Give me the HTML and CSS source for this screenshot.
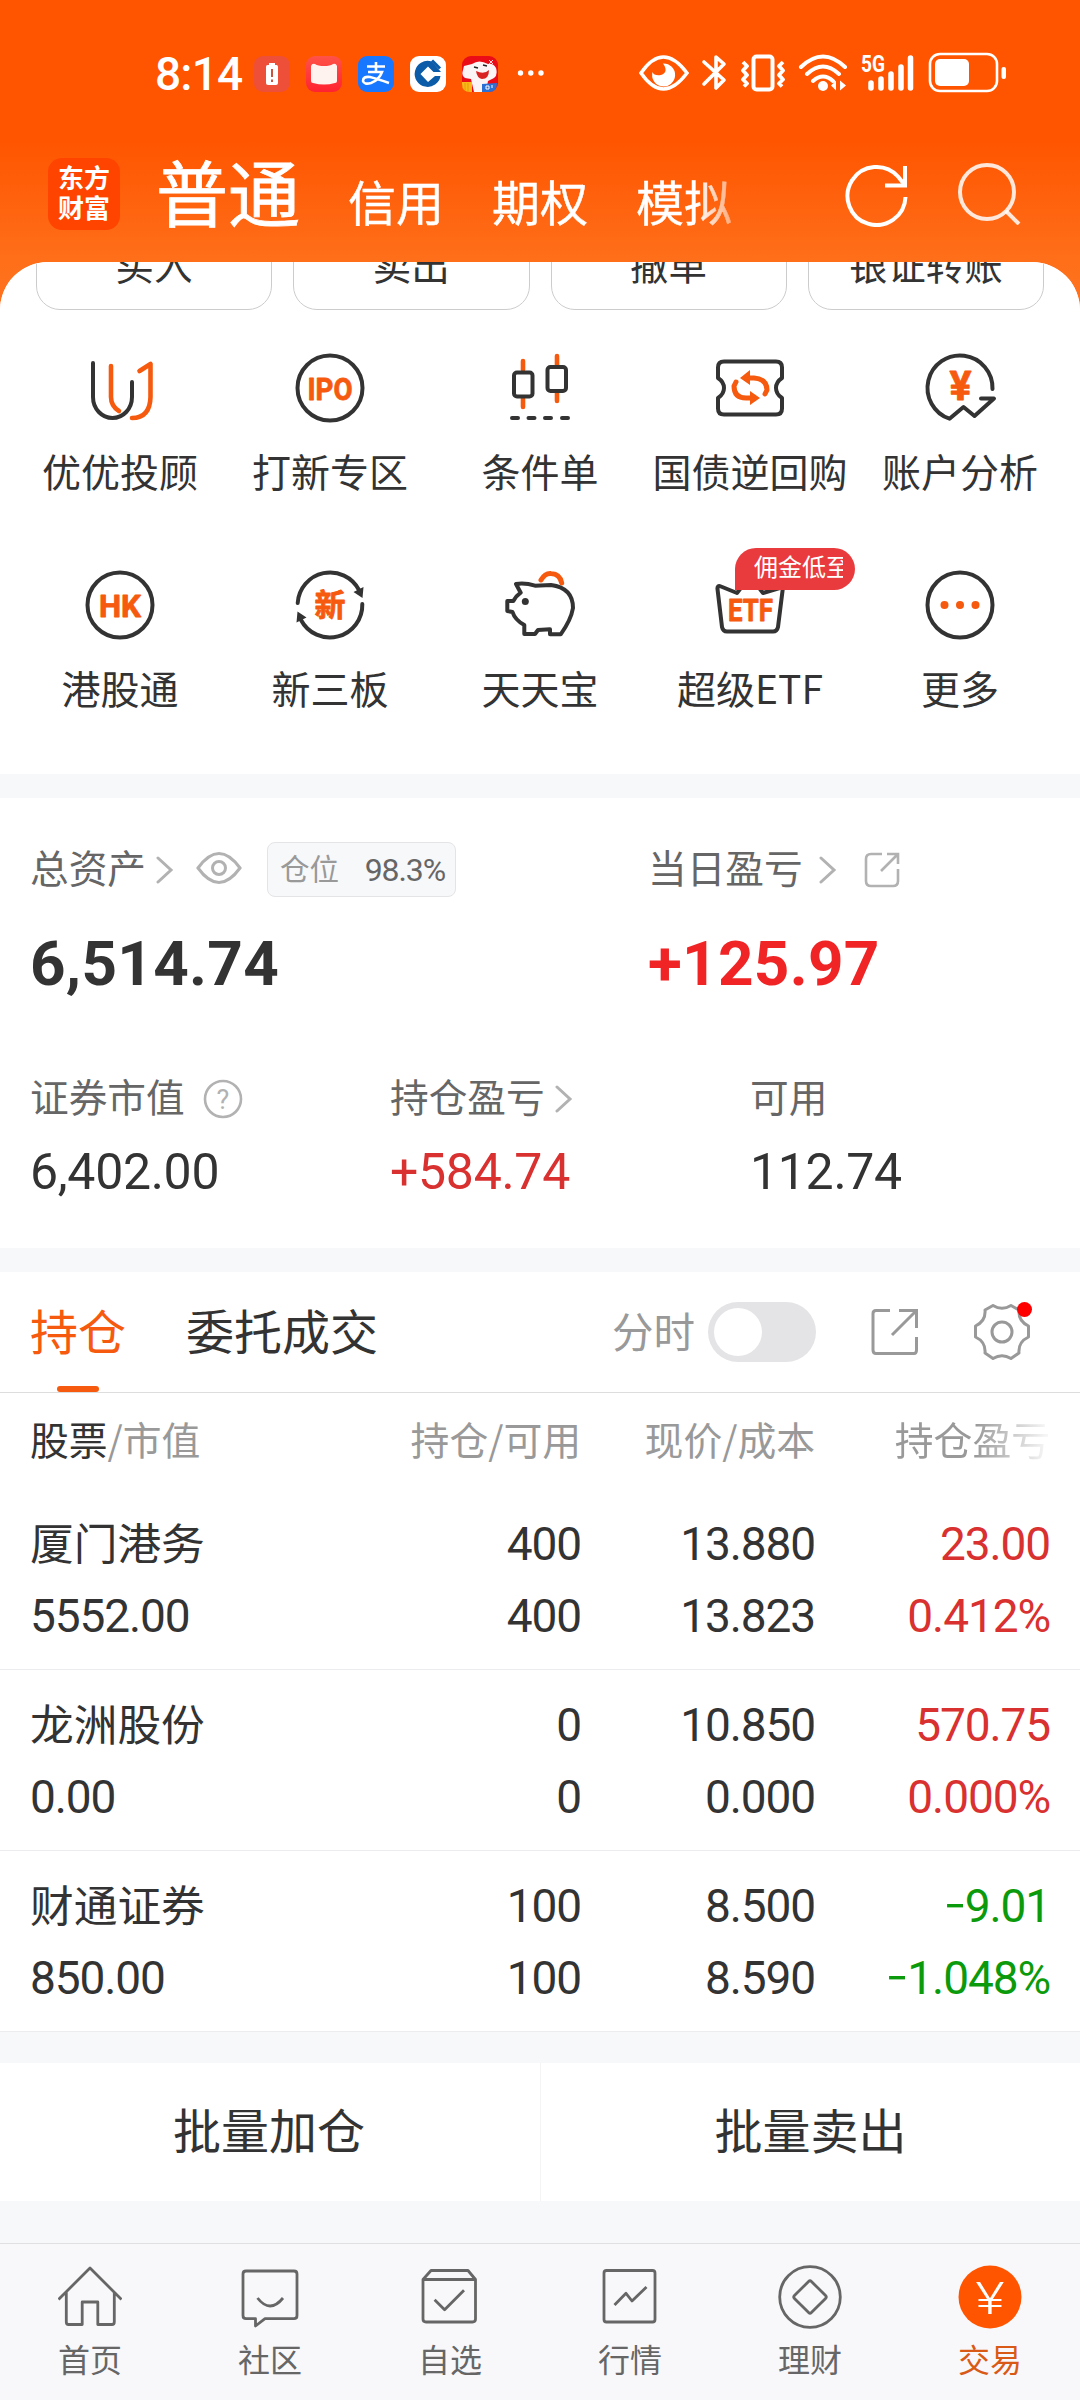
FILE: index.html
```html
<!DOCTYPE html>
<html lang="zh-CN">
<head>
<meta charset="utf-8">
<title>交易</title>
<link rel="stylesheet" href="styles.css">
</head>
<body>
<div class="phone">
  <header class="top">
    <div class="status">
      <span class="clock">8:14</span>
      <div class="apps">
        <svg class="app" viewBox="0 0 36 36"><rect width="36" height="36" rx="9" fill="#ee4f38"/><path d="M15 7h6v2h1.500q1.500 0 1.500 2v16q0 2-2 2h-8q-2 0-2-2V11q0-2 1.500-2H15z" fill="#fff"/><path d="M18 13v8M18 23.500v2.500" stroke="#c9543f" stroke-width="2"/></svg>
        <svg class="app" viewBox="0 0 36 36"><defs><linearGradient id="rg" x2="0" y2="1"><stop offset="0" stop-color="#ff5348"/><stop offset="1" stop-color="#ff2230"/></linearGradient></defs><rect width="36" height="36" rx="9" fill="url(#rg)"/><path d="M5 10q1-3 4-2 3 2 9 2t9-2q3-1 4 2v15q0 2-2 2-11 3-22 0-2 0-2-2z" fill="#fff3ef"/></svg>
        <svg class="app" viewBox="0 0 36 36"><rect width="36" height="36" rx="9" fill="#1777ff"/><g fill="none" stroke="#fff" stroke-width="2.600"><path d="M9 10.500h18M18 6v10M10 16h14q-3 8-11 11-7 2-8-2 0-5 7-4 8 2 19 6"/></g></svg>
        <svg class="app" viewBox="0 0 36 36"><rect width="36" height="36" rx="9" fill="#fff"/><path d="M21 5.300A13 13 0 1 0 30.500 20H25L18 26 10.500 18 18 10.500l5.500 5.500h7.500L24 8z" fill="#0b5ca8"/><path d="M22 4.500l8 8" stroke="#0b5ca8" stroke-width="3"/></svg>
        <svg class="app" viewBox="0 0 36 36"><rect width="36" height="36" rx="9" fill="#ea0c16"/><path d="M1 14Q-1 20 3 22l6 1 3 13h12l2-11 6-3q4-3 2-10-3-5-8-4Q17 3 10 8L2 10z" fill="#fbf5f5"/><path d="M14 15q8 4 13-1 0 9-7 9-5-1-6-8z" fill="#d92323"/><path d="M12 11l4 1M21 9l4 1" stroke="#222" stroke-width="1.500"/><path d="M27 4l4 4M31 4l-4 4" stroke="#ffd4d4"/><path d="M0 26h10v10H8q-8 0-8-8z" fill="#f8b917"/><path d="M20 28l15-1q0 9-8 9h-7z" fill="#2b70d4"/><path d="M3 27v7M6 27v8" stroke="#e89811"/><path d="M24 30h3v3h-3zM30 29v3" stroke="#fff" fill="none"/></svg>
        <svg class="dots" viewBox="0 0 28 8"><g fill="#fff"><circle cx="3.500" cy="4" r="2.700"/><circle cx="13.800" cy="4" r="2.700"/><circle cx="24" cy="4" r="2.700"/></g></svg>
      </div>
      <svg class="sys" viewBox="0 0 370 44" fill="none" stroke="#fff">
        <path d="M2 22Q24-10 48 22 24 54 2 22z" stroke-width="3.500"/>
        <path d="M13.500 21A11.500 11.500 0 1 0 24 12.500Q30 21 22 24 15 25 13.500 21z" fill="#fff" stroke="none"/>
        <path d="M65 11L85 29 77 37V6L85 13 65 33" stroke-width="3.600" stroke-linejoin="round" stroke-linecap="round"/>
        <rect x="114.500" y="5.500" width="19" height="33" rx="3" stroke-width="4"/>
        <path d="M104 11l4 4-4 4.500 4 4.500-4 4.500 4 4-3 3M144 11l-4 4 4 4.500-4 4.500 4 4.500-4 4 3 3" stroke-width="3.800" stroke-linejoin="round"/>
        <path d="M162 16Q184-5 206 16M168 23Q184 8 200 23M174 30Q184 21 194 30" stroke-width="4" stroke-linecap="round"/>
        <circle cx="184" cy="35" r="5" fill="#fff" stroke="none"/>
        <path d="M192 34.500l5-5v10zM201 29.500v10l6-5z" fill="#fff" stroke="none"/>
        <text x="222" y="20.500" class="g5" textLength="24" lengthAdjust="spacingAndGlyphs">5G</text>
        <path d="M232 32v5M242 28v9M252 23v14M262 16v21M271.500 7v30" stroke-width="5.500" stroke-linecap="round"/>
        <rect x="291" y="3" width="67" height="37" rx="10" stroke-width="2.600"/>
        <rect x="296" y="8" width="34" height="27" rx="5" fill="#fff" stroke="none"/>
        <rect x="362.500" y="16" width="4.500" height="12" rx="2" fill="#fff" stroke="none"/>
      </svg>
    </div>
    <nav class="head">
      <div class="logo"><span>东方</span><span>财富</span></div>
      <div class="kinds">
        <span class="kind-on">普通</span><span>信用</span><span>期权</span><span>模拟</span>
      </div>
      <svg class="refresh" viewBox="0 0 64 64" fill="none" stroke="#fff" stroke-width="4"><path d="M60.500 34A29 29 0 1 1 53 13.500L59 21"/><path d="M60 3V22.500H40"/></svg>
      <svg class="search" viewBox="0 0 64 64" fill="none" stroke="#fff" stroke-opacity=".85" stroke-width="4"><circle cx="29" cy="31" r="27"/><path d="M48 50L61 63"/></svg>
    </nav>
  </header>

  <main class="panel">
    <section class="quick">
      <div class="pills"><span>买入</span><span>卖出</span><span>撤单</span><span>银证转账</span></div>
      <div class="grid">
        <div class="cell"><svg viewBox="0 0 90 90"><path d="M18 20V54C18 66 27 75 37.500 75S57 66 57 54V39"/><path class="o" d="M36 23V54Q36 63 44 68M64.500 28L75.500 21V54Q75 75 57 75"/></svg><span>优优投顾</span></div>
        <div class="cell"><svg viewBox="0 0 90 90"><circle cx="45" cy="45" r="32.500"/><text x="22.500" y="56.500" textLength="45" lengthAdjust="spacingAndGlyphs">IPO</text></svg><span>打新专区</span></div>
        <div class="cell"><svg viewBox="0 0 90 90"><path class="o" d="M28 18v9M28 55v9M62 13v9M62 49v9"/><rect x="19" y="29.500" width="18.500" height="24" rx="3"/><rect x="52.500" y="24" width="18.500" height="24" rx="3"/><path d="M17 75h6M33.500 75h6M50 75h6M67 75h6"/></svg><span>条件单</span></div>
        <div class="cell"><svg viewBox="0 0 90 90"><path d="M19 18.500H71Q77 18.500 77 24.500V35Q71 39 71 45T77 55V65.500Q77 71.500 71 71.500H19Q13 71.500 13 65.500V55Q19 51 19 45T13 35V24.500Q13 18.500 19 18.500z"/><path class="o w" d="M42 35H49Q62 36 62 47L60 51M48 55H41Q29 55 29 43L31 39"/><path class="f" d="M35 35l10-8v15zM55 55l-10-7v14z"/></svg><span>国债逆回购</span></div>
        <div class="cell"><svg viewBox="0 0 90 90"><path d="M77.500 46A32.500 32.500 0 1 0 34.500 75.700L48.500 64 59.500 73 79 55.500H66"/><text x="45.500" y="57" text-anchor="middle" class="yen">¥</text></svg><span>账户分析</span></div>
        <div class="cell"><svg viewBox="0 0 90 90"><circle cx="45" cy="45" r="32.500"/><text x="24" y="56.500" textLength="42" lengthAdjust="spacingAndGlyphs">HK</text></svg><span>港股通</span></div>
        <div class="cell"><svg viewBox="0 0 90 90"><path d="M12.700 43A32.500 32.500 0 0 1 74 30M77.300 44A32.500 32.500 0 0 1 16 60"/><path class="d" d="M68.500 32l10-5-1 11zM21.500 57.500l-10 5 1-11z"/><text x="45" y="56" text-anchor="middle" class="xin">新</text></svg><span>新三板</span></div>
        <div class="cell"><svg viewBox="0 0 90 90"><path class="o w" d="M46 20Q50 13 56 13.500 65 14 66.700 23"/><path d="M25.700 32.700L21 24Q30 22.500 40 25.700L56 25Q78 28 78 48 76 60 65.700 74.300H55V69.300L43 70 40 74H29.300V65Q20 60 17.500 52L12.300 51V41H18.300Q21 36 25.700 32.700z"/><circle class="d" cx="30.300" cy="41.500" r="3.500"/></svg><span>天天宝</span></div>
        <div class="cell"><svg viewBox="0 0 90 90"><path d="M32 33L16 26.500Q12 25 12.500 29L17 67Q18 71.500 22 71.500H68Q72 71.500 73 67L78 27 58 33 45 16z"/><text x="23" y="61" textLength="45" lengthAdjust="spacingAndGlyphs">ETF</text></svg><span>超级ETF</span><div class="badge"><b>佣金低至</b></div></div>
        <div class="cell"><svg viewBox="0 0 90 90"><circle cx="45" cy="45" r="32.500"/><g class="f"><circle cx="29.500" cy="45" r="4"/><circle cx="45" cy="45" r="4"/><circle cx="60.500" cy="45" r="4"/></g></svg><span>更多</span></div>
      </div>
    </section>

    <section class="assets">
      <div class="row-a">
        <div class="total">
          <div class="lab"><span>总资产</span>
            <svg class="chev" viewBox="0 0 18 28"><path d="M2 2L15 14 2 26"/></svg>
            <svg class="eye" viewBox="0 0 46 34"><path d="M2 17Q23-12 44 17 23 46 2 17z"/><circle cx="23" cy="17" r="6.500"/></svg>
            <div class="pos"><span>仓位</span><b>98.3%</b></div>
          </div>
          <div class="big">6,514.74</div>
        </div>
        <div class="today">
          <div class="lab"><span>当日盈亏</span>
            <svg class="chev far" viewBox="0 0 18 28"><path d="M2 2L15 14 2 26"/></svg>
            <svg class="out" viewBox="0 0 36 36"><path d="M18 2H7Q2 2 2 7V29Q2 34 7 34H29Q34 34 34 29V17M17 19L33 3M23 2H34V12"/></svg>
          </div>
          <div class="big up">+125.97</div>
        </div>
      </div>
      <div class="row-b">
        <div><div class="lab"><span>证券市值</span><svg class="help" viewBox="0 0 40 40"><circle cx="20" cy="20" r="18"/><text x="20" y="29.500" text-anchor="middle">?</text></svg></div><div class="val">6,402.00</div></div>
        <div><div class="lab"><span>持仓盈亏</span><svg class="chev" viewBox="0 0 18 28"><path d="M2 2L15 14 2 26"/></svg></div><div class="val red">+584.74</div></div>
        <div><div class="lab"><span>可用</span></div><div class="val">112.74</div></div>
      </div>
    </section>

    <section class="hold">
      <div class="tabs">
        <span class="tab on">持仓</span><span class="tab">委托成交</span>
        <span class="fs">分时</span><span class="toggle"><i></i></span>
        <svg class="share" viewBox="0 0 48 48"><path d="M19 2.500H5Q2 2.500 2 5.500V42Q2 45.500 5 45.500H43Q45.500 45.500 45.500 42V29M21 27L45 3M28 2.500H45.500V20"/></svg>
        <div class="gear"><svg viewBox="0 0 56 56"><path d="M19 1.500Q28 7 37 1.500L45 6Q44 17 54.500 22V33Q44 38 45 49L37 54.500Q28 49 19 54.500L11 49Q12 38 1.500 33V22Q12 17 11 6z"/><circle cx="28" cy="28" r="10"/></svg><i></i></div>
      </div>
      <div class="line thead"><span><em>股票</em>/市值</span><span>持仓/可用</span><span>现价/成本</span><span class="fade">持仓盈亏</span></div>
      <div class="line stock"><div><b>厦门港务</b><u>5552.00</u></div><div><u>400</u><u>400</u></div><div><u>13.880</u><u>13.823</u></div><div class="red"><u>23.00</u><u>0.412%</u></div></div>
      <div class="line stock"><div><b>龙洲股份</b><u>0.00</u></div><div><u>0</u><u>0</u></div><div><u>10.850</u><u>0.000</u></div><div class="red"><u>570.75</u><u>0.000%</u></div></div>
      <div class="line stock"><div><b>财通证券</b><u>850.00</u></div><div><u>100</u><u>100</u></div><div><u>8.500</u><u>8.590</u></div><div class="green"><u><s>−</s>9.01</u><u><s>−</s>1.048%</u></div></div>
    </section>

    <div class="batch"><span>批量加仓</span><span>批量卖出</span></div>
  </main>

  <nav class="bar">
    <div><svg viewBox="0 0 64 64"><path d="M.5 34.500L32 3 63.500 34.500M8.300 27.500V57Q8.300 59.500 10.500 59.500H24.200V37H39.800V59.500H54Q56.300 59.500 56.300 57V27.500"/></svg><span>首页</span></div>
    <div><svg viewBox="0 0 64 64"><path d="M8 6H56Q59 6 59 9V50.500Q59 53.700 56 53.700H27L17.500 61V53.700H8Q5 53.700 5 50.500V9Q5 6 8 6zM19.500 33Q32 49 45 33"/></svg><span>社区</span></div>
    <div><svg viewBox="0 0 64 64"><path d="M5 14.500H57.500V54Q57.500 57 54.500 57H8Q5 57 5 54V14.500L13 5.500H50L57.500 14.500M16.600 34.700L26.600 44.700 46 25.300"/></svg><span>自选</span></div>
    <div><svg viewBox="0 0 64 64"><rect x="6" y="5.500" width="51" height="51.500" rx="2.500"/><path d="M16.500 40L28 28.300 34 36 48.500 22"/></svg><span>行情</span></div>
    <div><svg viewBox="0 0 64 64"><circle cx="32" cy="32" r="30.300"/><rect x="20" y="20" width="24" height="24" rx="2" transform="rotate(45 32 32)"/></svg><span>理财</span></div>
    <div class="on"><svg viewBox="0 0 64 64"><circle cx="32" cy="32" r="31.500"/><text x="17.500" y="48.500" textLength="29" lengthAdjust="spacingAndGlyphs">¥</text></svg><span>交易</span></div>
  </nav>
</div>
</body>
</html>
```
FILE: styles.css
```css
* { box-sizing: border-box; }
body { margin: 0; font-family: "Noto Sans CJK SC", sans-serif; color: #333; }
svg { display: block; flex: none; }
b, em, u, i, s { font-weight: 400; font-style: normal; text-decoration: none; }
span, b, u { white-space: nowrap; }

.phone { width: 1080px; height: 2400px; display: flex; flex-direction: column; overflow: hidden;
  background: linear-gradient(#ff5500 140px, #ff6f1a 262px, #ff7420 320px); }

/* status bar */
.top { height: 262px; flex: none; color: #fff; }
.status { height: 146px; padding: 0 71px 0 155px; display: flex; align-items: center; }
.clock { font: 500 46px/50px Roboto, sans-serif; letter-spacing: -.8px; width: 99px; margin-top: 1px; }
.apps { display: flex; align-items: center; gap: 16px; }
.app { width: 36px; height: 36px; margin-top: 2px; }
.dots { width: 28px; height: 8px; margin-left: 3px; }
.sys { width: 370px; height: 44px; margin-left: auto; }
.g5 { font: 700 24px Roboto, sans-serif; fill: #fff; stroke: none; }

.head { height: 116px; display: flex; align-items: flex-start; padding-left: 48px; }
.logo { width: 72px; height: 72px; margin-top: 12px; padding-top: 4px; border-radius: 14px; background: #ff4400;
  display: flex; flex-direction: column; align-items: center; font: 700 26px/30px "Noto Sans CJK SC", sans-serif; }
.kinds { width: 612px; margin-left: 36px; display: flex; align-items: baseline; gap: 48px; font-size: 48px; line-height: 60px;
  -webkit-text-stroke: .4px #fff;
  -webkit-mask-image: linear-gradient(90deg, #000 540px, transparent 606px); mask-image: linear-gradient(90deg, #000 540px, transparent 606px); }
.kind-on { font-size: 72px; line-height: 88px; -webkit-text-stroke: .8px #fff; }
.refresh { width: 64px; height: 64px; margin: 17px 0 0 77px; }
.search { width: 64px; height: 64px; margin: 15px 0 0 49px; }

/* white sheet */
.panel { flex: 1; min-height: 0; overflow: hidden; border-radius: 48px 48px 0 0; background: #f7f8fa; }
.quick { height: 512px; background: #fff; }
.pills { display: grid; grid-template-columns: repeat(4, 1fr); gap: 21px; padding: 0 36px; }
.pills span { height: 88px; margin-top: -40px; border: 1px solid #ccc; border-radius: 24px; text-align: center; font-size: 38.500px; line-height: 81px; }
.grid { display: grid; grid-template-columns: repeat(5, 210px); grid-auto-rows: 217px; padding: 33px 15px 0; }
.cell { position: relative; display: flex; flex-direction: column; align-items: center; font-size: 39px; line-height: 54px; }
.cell svg { width: 90px; height: 90px; fill: none; stroke: #333; stroke-width: 4px; stroke-linecap: round; stroke-linejoin: round; }
.cell span { margin-top: 10px; }
.cell .o { stroke: #f65a0e; stroke-width: 4.600px; }
.cell .w { stroke-width: 5px; }
.cell .f { fill: #f65a0e; stroke: none; }
.cell .d { fill: #333; stroke: none; }
.cell text { font: 700 31px Roboto, sans-serif; fill: #f65a0e; stroke: #f65a0e; stroke-width: .8px; }
.cell .yen { font-size: 41px; }
.cell .xin { font: 700 31px "Noto Sans CJK SC", sans-serif; }
.badge { position: absolute; left: 90px; top: -12px; width: 120px; height: 42px; padding: 0 12px 0 19px; background: #e93b3d;
  border-radius: 21px 21px 21px 0; color: #fff; font-size: 24px; line-height: 36px; }
.badge b { display: block; overflow: hidden; height: 40px; }

/* assets */
.assets { height: 450px; margin-top: 24px; background: #fff; padding: 40px 30px 0; }
.lab { display: flex; align-items: center; height: 60px; color: #666; font-size: 38.700px; line-height: 56px; }
.lab span { margin-top: -5px; }
.row-a, .row-b { display: flex; }
.total { width: 618px; flex: none; }
.chev { width: 18px; height: 28px; margin: 3px 0 0 10px; fill: none; stroke: #b2b2b2; stroke-width: 3px; stroke-linecap: round; }
.far { margin-left: 16px; }
.eye { width: 46px; height: 34px; margin-left: 22px; fill: none; stroke: #b2b2b2; stroke-width: 3px; }
.pos { width: 189px; height: 55px; margin: 3px 0 0 25px; border: 1px solid #e4e4e6; border-radius: 8px; background: #f7f8fa;
  display: flex; align-items: center; justify-content: space-between; padding: 0 10px 0 12px; font-size: 29.500px; color: #999; }
.pos b { font: 32px/50px Roboto, sans-serif; letter-spacing: -1.100px; color: #666; }
.out { width: 36px; height: 36px; margin: 3px 0 0 27px; fill: none; stroke: #b2b2b2; stroke-width: 2.600px; }
.big { margin-top: 30px; font: 700 62px/72px Roboto, sans-serif; letter-spacing: .3px; }
.up { color: #f02424; }
.row-b { margin-top: 67px; }
.row-b > div { width: 360px; flex: none; }
.val { margin-top: 15px; font: 50px/60px Roboto, sans-serif; letter-spacing: -.3px; }
.red { color: #d93030; }
.green { color: #0b9a0b; }
.help { width: 40px; height: 40px; margin: 3px 0 0 18px; fill: none; stroke: #b2b2b2; stroke-width: 2.600px; }
.help text { font: 27px Roboto, sans-serif; fill: #b2b2b2; stroke: none; }

/* holdings */
.hold { margin-top: 24px; background: #fff; }
.tabs { height: 121px; border-bottom: 1px solid #ddd; display: flex; align-items: center; padding-left: 30px; }
.tab { position: relative; margin-right: 60px; font-size: 48px; line-height: 110px; margin-top: -7px; }
.tab.on { color: #f65a0e; }
.tab.on::after { content: ""; position: absolute; left: 27px; bottom: -8px; width: 42px; height: 6px; border-radius: 3px; background: #f65a0e; }
.fs { width: 84px; margin: -5px 12px 0 174px; color: #999; font-size: 41.500px; }
.toggle { width: 108px; height: 60px; padding: 6px; border-radius: 30px; background: #e4e4e6; }
.toggle i { display: block; width: 48px; height: 48px; border-radius: 50%; background: #fff; }
.share { width: 48px; height: 48px; margin-left: 55px; fill: none; stroke: #999; stroke-width: 3px; }
.gear { position: relative; margin-left: 55px; }
.gear svg { width: 56px; height: 56px; fill: none; stroke: #999; stroke-width: 3px; stroke-linejoin: round; }
.gear i { position: absolute; left: 43px; top: -2px; width: 15px; height: 15px; border-radius: 50%; background: #f00; }
.line { display: grid; grid-template-columns: 251px 300px 234px 235px; padding-left: 30px; text-align: right; }
.line > :first-child { text-align: left; }
.thead { height: 96px; color: #999; font-size: 38.800px; line-height: 91px; }
.thead em { color: #333; }
.fade { -webkit-mask-image: linear-gradient(90deg, #000 160px, rgba(0,0,0,.1) 230px); mask-image: linear-gradient(90deg, #000 160px, rgba(0,0,0,.1) 230px); }
.stock { height: 181px; padding-top: 19px; border-bottom: 1px solid #ececee; }
.stock b, .stock u { display: block; height: 72px; line-height: 73px; }
.stock b { font-size: 43.700px; line-height: 66px; }
.stock u { font-family: Roboto, sans-serif; font-size: 46px; letter-spacing: -1.100px; }
.stock s { display: inline-block; transform: scaleX(.85); transform-origin: right; }

.batch { margin-top: 31px; height: 138px; background: #fff; display: grid; grid-template-columns: 1fr 1fr; text-align: center; font-size: 48px; line-height: 130px; }
.batch span + span { border-left: 1px solid #f4f4f6; }
.batch span:first-child { padding-right: 2px; }

/* bottom bar */
.bar { height: 157px; flex: none; border-top: 1px solid #e0e0e2; background: #f8f8fa; display: grid; grid-template-columns: repeat(6, 180px); color: #666; font-size: 32px; line-height: 44px; }
.bar div { display: flex; flex-direction: column; align-items: center; padding-top: 21px; }
.bar svg { width: 64px; height: 64px; fill: none; stroke: #666; stroke-width: 2.800px; stroke-linejoin: round; }
.bar span { margin-top: 7px; }
.bar .on { color: #d95a16; }
.on circle { fill: #ff5500; stroke: none; }
.on text { font: 300 45px Roboto, sans-serif; fill: #fff; stroke: none; }
```
